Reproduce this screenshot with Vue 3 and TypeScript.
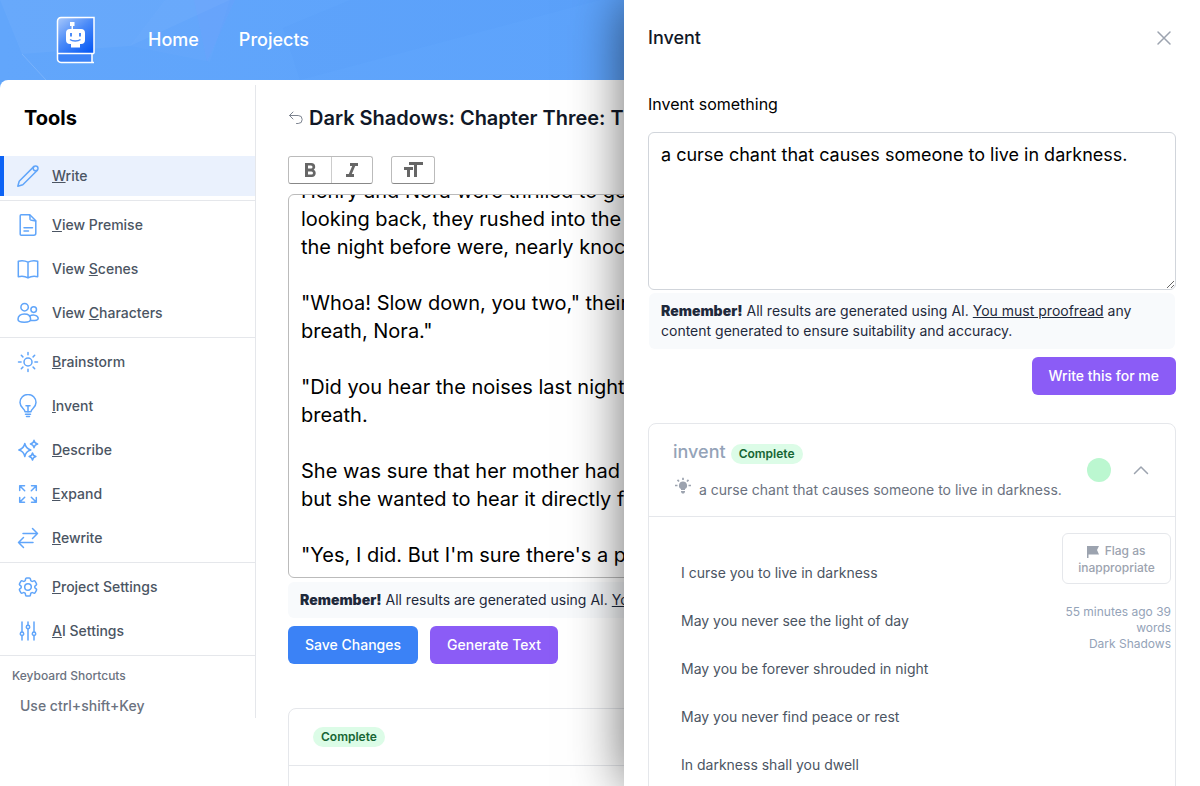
<script setup lang="ts">
import { onMounted, ref } from 'vue'

interface Tool {
  icon: string
  before: string
  key: string
  after: string
  active?: boolean
}

const groups: Tool[][] = [
  [{ icon: 'pencil', before: '', key: 'W', after: 'rite', active: true }],
  [
    { icon: 'document', before: '', key: 'V', after: 'iew Premise' },
    { icon: 'book', before: 'View ', key: 'S', after: 'cenes' },
    { icon: 'people', before: 'View ', key: 'C', after: 'haracters' },
  ],
  [
    { icon: 'sun', before: '', key: 'B', after: 'rainstorm' },
    { icon: 'bulb', before: '', key: 'I', after: 'nvent' },
    { icon: 'sparkles', before: '', key: 'D', after: 'escribe' },
    { icon: 'expand', before: '', key: 'E', after: 'xpand' },
    { icon: 'swap', before: '', key: 'R', after: 'ewrite' },
  ],
  [
    { icon: 'gear', before: '', key: 'P', after: 'roject Settings' },
    { icon: 'sliders', before: '', key: 'A', after: 'I Settings' },
  ],
]

const icons: Record<string, string[]> = {
  pencil: [
    'M17.800 2.600L3.200 17.200l-1.400 5 5-1.400L21.400 6.200',
    'M22 4.400a2.400 2.400 0 1 1-4.800 0a2.400 2.400 0 0 1 4.800 0z',
  ],
  document: [
    'M5.2 1.8h8.600l6 6v12.400a2 2 0 0 1-2 2H5.200a1 1 0 0 1-1-1V2.800a1 1 0 0 1 1-1z',
    'M13.500 2c1 1.200.2 3.300.6 4.500.5 1.300 3.500.8 5.400 1.500',
    'M8 14.800h8.500M8 18h4.500',
  ],
  book: [
    'M12 5.200C9 3.600 5.500 3.500 2.300 4.200v15.500c3.200-.7 6.700-.6 9.700 1.200 3-1.800 6.500-1.900 9.700-1.200V4.200C18.500 3.500 15 3.600 12 5.200zM12 5.200v15.500',
  ],
  people: [
    'M12.300 6.200a3.700 3.700 0 1 1-7.400 0a3.700 3.700 0 0 1 7.400 0z',
    'M20.500 8.600a2.800 2.800 0 1 1-5.600 0a2.800 2.800 0 0 1 5.600 0z',
    'M2 18.200c0-3.300 2.500-5.200 6.300-5.200s6.300 2 6.300 5.200c0 2-2 3-6.300 3S2 20.200 2 18.200z',
    'M13.500 15.200c3.800-2.200 8.700-.7 8.700 2.300 0 1.700-2.400 2.200-7.600 2',
  ],
  sun: [
    'M16 12a4 4 0 1 1-8 0a4 4 0 0 1 8 0z',
    'M12 2.500v2.300M12 19.200v2.300M2.500 12h2.600M18.900 12h2.600M5.300 5.300l1.600 1.600M17.100 17.100l1.600 1.600M5.300 18.700l1.600-1.600M17.100 6.900l1.600-1.600',
  ],
  bulb: [
    'M9 17.800c0-3-5-4-5-9.300a8 8 0 0 1 16 0c0 5.300-5 6.300-5 9.300z',
    'M12 17.800v-6M10 11.800h4M9.500 20.300h5M10.500 22.500h3',
  ],
  sparkles: [
    'M8.800 5.500c.8 4 2.200 5.500 6 6.500-3.800 1-5.200 2.500-6 6.500-.8-4-2.200-5.500-6-6.500 3.800-1 5.200-2.500 6-6.500z',
    'M18 2.300c.4 2.200 1.300 3.200 3.600 3.700-2.300.5-3.200 1.500-3.600 3.700-.4-2.200-1.300-3.200-3.600-3.700 2.300-.5 3.200-1.500 3.600-3.700z',
    'M16.500 15c.4 2.200 1.200 3 3.400 3.500-2.200.5-3 1.400-3.400 3.500-.4-2.100-1.200-3-3.400-3.500 2.200-.5 3-1.300 3.400-3.500z',
  ],
  expand: [
    'M3.700 8.500V3.700h4.800M3.700 3.700l5 5M15.500 3.700h4.800v4.800M20.300 3.700l-5 5M3.700 15.500v4.800h4.800M3.700 20.300l5-5M20.300 15.500v4.800h-4.800M20.300 20.300l-5-5',
  ],
  swap: ['M7 7.500h14.500M16.500 2.500l5 5-5 5M17 16.500H2.500M7.500 11.500l-5 5 5 5'],
  gear: [
    'M9.594 3.940c.09-.542.56-.94 1.110-.94h2.593c.55 0 1.020.398 1.110.94l.213 1.281c.063.374.313.686.645.87.074.04.147.083.22.127.325.196.72.257 1.075.124l1.217-.456a1.125 1.125 0 0 1 1.370.49l1.296 2.247a1.125 1.125 0 0 1-.26 1.431l-1.003.827c-.293.241-.438.613-.43.992a7.723 7.723 0 0 1 0 .255c-.008.378.137.75.43.991l1.004.827c.424.35.534.955.26 1.430l-1.298 2.247a1.125 1.125 0 0 1-1.369.491l-1.217-.456c-.355-.133-.75-.072-1.076.124a6.470 6.470 0 0 1-.22.128c-.331.183-.581.495-.644.869l-.213 1.281c-.09.543-.56.94-1.110.94h-2.594c-.55 0-1.019-.398-1.110-.94l-.213-1.281c-.062-.374-.312-.686-.644-.87a6.520 6.520 0 0 1-.22-.127c-.325-.196-.72-.257-1.076-.124l-1.217.456a1.125 1.125 0 0 1-1.369-.49l-1.297-2.247a1.125 1.125 0 0 1 .26-1.431l1.004-.827c.292-.24.437-.613.43-.991a6.932 6.932 0 0 1 0-.255c.007-.38-.138-.751-.43-.992l-1.004-.827a1.125 1.125 0 0 1-.26-1.430l1.297-2.247a1.125 1.125 0 0 1 1.370-.491l1.216.456c.356.133.751.072 1.076-.124.072-.044.146-.086.22-.128.332-.183.582-.495.644-.869z',
    'M15.300 12a3.300 3.300 0 1 1-6.600 0a3.300 3.300 0 0 1 6.600 0z',
  ],
  sliders: [
    'M6 3v10M6 16.500V21M12 3v3M12 9.500V21M18 3v10M18 16.500V21',
    'M7.700 14.800a1.700 1.700 0 1 1-3.400 0a1.700 1.700 0 0 1 3.400 0zM13.700 8a1.700 1.700 0 1 1-3.400 0a1.700 1.700 0 0 1 3.400 0zM19.700 14.800a1.700 1.700 0 1 1-3.400 0a1.700 1.700 0 0 1 3.400 0z',
  ],
}

const chapter = ref(
  [
    'Henry and Nora were thrilled to get',
    'looking back, they rushed into the',
    'the night before were, nearly knock',
    '',
    '"Whoa! Slow down, you two," their',
    'breath, Nora."',
    '',
    '"Did you hear the noises last night',
    'breath.',
    '',
    'She was sure that her mother had',
    'but she wanted to hear it directly f',
    '',
    '"Yes, I did. But I\'m sure there\'s a pe',
  ].join('\n'),
)
const prompt = ref('a curse chant that causes someone to live in darkness.')
const verses = [
  'I curse you to live in darkness',
  'May you never see the light of day',
  'May you be forever shrouded in night',
  'May you never find peace or rest',
  'In darkness shall you dwell',
]

const editor = ref<HTMLTextAreaElement | null>(null)
onMounted(() => {
  if (editor.value) editor.value.scrollTop = editor.value.scrollHeight
})
</script>

<template>
  <div class="page">
    <header class="topbar">
      <svg class="facets" viewBox="0 0 1200 80" preserveAspectRatio="none" aria-hidden="true">
        <path d="M0 0h230L130 46 22 54z" fill="#fff" opacity=".04" />
        <path d="M165 0h65l-20 62-80-16z" fill="#fff" opacity=".02" />
        <path d="M194 0l13 62L235 0z" fill="#7c9cff" opacity=".14" />
        <path d="M283 28L350 0h250L300 80z" fill="#3b8ff5" opacity=".05" />
        <path d="M22 54l24 26" stroke="#fff" opacity=".15" />
      </svg>
      <a class="logo" href="#" aria-label="Home page">
        <svg width="40" height="48" viewBox="0 0 40 48" aria-hidden="true">
          <defs>
            <linearGradient id="cover" x1="0" y1="0" x2=".8" y2="1">
              <stop offset="0" stop-color="#a9c9fb" />
              <stop offset=".5" stop-color="#4b8bf8" />
              <stop offset="1" stop-color="#0b5cf5" />
            </linearGradient>
          </defs>
          <path d="M5 1.500h33v36H1.500V5A3.500 3.500 0 0 1 5 1.500z" fill="url(#cover)" />
          <path d="M1.500 37.500h34.500v8.500H5a3.500 3.500 0 0 1-3.500-3.500z" fill="#3b82f6" />
          <path d="M38 37.500V1.500H5A3.500 3.500 0 0 0 1.500 5v37.500A3.500 3.500 0 0 0 5 46.500h33M1.500 37.500H38M36 37.500v9" fill="none" stroke="#fff" stroke-width="1.500" />
          <path d="M14 6h4.500v4H17v3h8a4 4 0 0 1 4 4v7a4 4 0 0 1-4 4h-1v3.500h-9V28h-1a4 4 0 0 1-4-4v-7a4 4 0 0 1 4-4h1.500v-3H14z" fill="#fff" />
          <path d="M15 17v3.500M24 17v3.500" stroke="#4b8bf8" stroke-width="2" />
          <path d="M14 23.500c2.500 2 8 2 10.500 0" fill="none" stroke="#4b8bf8" stroke-width="1.500" />
        </svg>
      </a>
      <nav class="links">
        <a href="#">Home</a>
        <a href="#">Projects</a>
      </nav>
    </header>

    <div class="body">
      <aside class="sidebar">
        <h2>Tools</h2>
        <nav>
          <div v-for="(group, g) in groups" :key="g" class="group">
            <a v-for="t in group" :key="t.icon" href="#" class="tool" :class="{ active: t.active }">
              <svg class="tool-icon" width="24" height="24" viewBox="0 0 24 24" aria-hidden="true">
                <path v-for="d in icons[t.icon]" :key="d" :d="d" />
              </svg>
              <span>{{ t.before }}<u>{{ t.key }}</u>{{ t.after }}</span>
            </a>
          </div>
        </nav>
        <div class="shortcuts">
          <h3>Keyboard Shortcuts</h3>
          <p>Use ctrl+shift+Key</p>
        </div>
      </aside>

      <main class="main">
        <h1>
          <a href="#" aria-label="Back">
            <svg width="16" height="16" viewBox="0 0 16 16" fill="none" stroke="#7d8490" stroke-linecap="round" stroke-linejoin="round" aria-hidden="true">
              <path d="M5 2L1.500 5.500 5 9M1.500 5.500h8.700a4 4 0 0 1 0 8H8.500" />
            </svg>
          </a>
          <span>Dark Shadows: Chapter Three: Ti</span>
        </h1>
        <div class="toolbar">
          <div class="btns">
            <button type="button" aria-label="Bold">
              <svg width="24" height="24" viewBox="0 0 24 24" aria-hidden="true">
                <path d="M15.600 11.800c1-.7 1.600-1.800 1.600-2.800a4 4 0 0 0-4-4H7v14h7c2.100 0 3.700-1.700 3.700-3.800 0-1.500-.8-2.800-2.100-3.400zM10 7.500h3a1.500 1.500 0 1 1 0 3h-3v-3zm3.500 9H10v-3h3.500a1.500 1.500 0 1 1 0 3z" />
              </svg>
            </button>
            <button type="button" aria-label="Italic">
              <svg width="24" height="24" viewBox="0 0 24 24" aria-hidden="true">
                <path d="M10 5v3h2.200l-3.400 8H6v3h8v-3h-2.200l3.400-8H18V5h-8z" />
              </svg>
            </button>
          </div>
          <div class="btns">
            <button type="button" aria-label="Heading">
              <svg width="24" height="24" viewBox="0 0 24 24" aria-hidden="true">
                <path d="M12 9v3H9v7H6v-7H3V9h9zM8 4h14v3h-6v12h-3V7H8V4z" />
              </svg>
            </button>
          </div>
        </div>
        <textarea ref="editor" v-model="chapter" class="editor" wrap="off" aria-label="Chapter text"></textarea>
        <p class="notice"><strong>Remember!</strong> All results are generated using AI. <u>You</u></p>
        <div class="actions">
          <button type="button" class="btn blue">Save Changes</button>
          <button type="button" class="btn purple">Generate Text</button>
        </div>
        <section class="card history">
          <div class="history-head"><span class="badge">Complete</span></div>
        </section>
      </main>
    </div>

    <section class="drawer" role="dialog" aria-labelledby="drawer-title">
      <div class="drawer-head">
        <h2 id="drawer-title">Invent</h2>
        <button type="button" class="plain" aria-label="Close">
          <svg width="24" height="24" viewBox="0 0 24 24" fill="none" stroke="#9ca3af" stroke-width="1.500" stroke-linecap="round" aria-hidden="true">
            <path d="M6 6l12 12M18 6L6 18" />
          </svg>
        </button>
      </div>
      <label for="prompt">Invent something</label>
      <textarea id="prompt" v-model="prompt" class="prompt"></textarea>
      <p class="notice inset"><strong>Remember!</strong> All results are generated using AI. <u>You must proofread</u> any content generated to ensure suitability and accuracy.</p>
      <div class="submit"><button type="button" class="btn purple">Write this for me</button></div>

      <article class="card">
        <div class="result-head">
          <div class="result-title">
            <div class="kind"><h3>invent</h3><span class="badge">Complete</span></div>
            <p>
              <svg width="20" height="20" viewBox="0 0 20 20" aria-hidden="true">
                <path d="M10 5.500a4 4 0 0 0-2 7.500V14h4v-1a4 4 0 0 0-2-7.500zM8 15h4v1l-1 1.500H9L8 16z" fill="#9ca3af" />
                <path d="M10 1.800v2.200M4.500 3.900l1.500 1.600M15.500 3.900L14 5.500M2 9.500h2.500M15.500 9.500H18" stroke="#9ca3af" stroke-width="1.700" fill="none" />
              </svg>
              <span>{{ prompt }}</span>
            </p>
          </div>
          <span class="dot"></span>
          <button type="button" class="plain" aria-label="Collapse">
            <svg width="20" height="20" viewBox="0 0 20 20" fill="none" stroke="#9ca3af" stroke-width="1.500" stroke-linecap="round" stroke-linejoin="round" aria-hidden="true">
              <path d="M3.500 13.500L10 7l6.500 6.500" />
            </svg>
          </button>
        </div>
        <div class="result-body">
          <div class="verses">
            <p v-for="v in verses" :key="v">{{ v }}</p>
          </div>
          <div class="meta">
            <button type="button" class="flag">
              <svg width="12" height="12" viewBox="0 0 12 12" aria-hidden="true">
                <path d="M0 0h12l-2 4 2 4.500H1.500V12H0z" fill="#9ca3af" />
              </svg>
              Flag as inappropriate
            </button>
            <p>55 minutes ago 39 words<br />Dark Shadows</p>
          </div>
        </div>
      </article>
    </section>
  </div>
</template>

<style>
html,
body {
  margin: 0;
  background: #fff;
}
</style>

<style scoped>
.page,
.page * {
  box-sizing: border-box;
}
.page {
  position: relative;
  height: 100vh;
  overflow: hidden;
  background: #60a5fa;
  font-family: Inter, "Liberation Sans", sans-serif;
  font-size: 14px;
  line-height: 20px;
  color: #1e293b;
}
h1, h2, h3, p {
  margin: 0;
}
a {
  color: inherit;
  text-decoration: none;
}
button, textarea {
  font: inherit;
}
button {
  cursor: pointer;
}
.topbar {
  position: relative;
  display: flex;
  align-items: center;
  height: 80px;
  padding-left: 56px;
  gap: 52px;
  background: linear-gradient(90deg, #62a6fb, #58a0fc);
}
.facets {
  position: absolute;
  inset: 0;
  width: 100%;
  height: 100%;
}
.logo, .links {
  position: relative;
  display: flex;
}
.links {
  gap: 40px;
  font-size: 18px;
  font-weight: 500;
  line-height: 28px;
  color: #fff;
}
.body {
  display: flex;
  align-items: flex-start;
  min-height: calc(100vh - 80px);
  background: #fff;
  border-top-left-radius: 8px;
}
.sidebar {
  flex: 0 0 256px;
  margin-top: 5px;
  padding: 19px 0 2px;
  border-right: 1px solid #e5e7eb;
}
.sidebar h2 {
  padding: 0 24px;
  margin-bottom: 20px;
  font-size: 20px;
  font-weight: 700;
  line-height: 28px;
  color: #000;
}
.group {
  display: flex;
  flex-direction: column;
  gap: 4px;
  padding: 4px 0;
  border-bottom: 1px solid #e5e7eb;
}
.tool {
  display: flex;
  align-items: center;
  gap: 12px;
  height: 40px;
  padding-left: 16px;
  font-weight: 500;
  color: #4b5563;
}
.tool.active {
  padding-left: 12px;
  border-left: 4px solid #0d63f5;
  background: #eaf1fd;
}
.tool-icon {
  fill: none;
  stroke: #60a5fa;
  stroke-width: 1.5;
  stroke-linecap: round;
  stroke-linejoin: round;
}
.shortcuts {
  padding: 12px 12px 0;
  color: #6b7280;
}
.shortcuts h3 {
  margin-bottom: 12px;
  font-size: 12px;
  font-weight: 500;
  line-height: 16px;
}
.shortcuts p {
  padding-left: 8px;
  font-weight: 500;
}
.main {
  flex: 1;
  min-width: 0;
  padding: 24px 32px 0;
}
.main h1 {
  display: flex;
  align-items: center;
  gap: 5px;
  font-size: 20px;
  font-weight: 600;
  line-height: 28px;
  color: #111827;
  white-space: nowrap;
}
.main h1 a {
  display: flex;
}
.toolbar {
  display: flex;
  gap: 18px;
  margin: 24px 0 10px;
}
.btns {
  display: flex;
  border: 1px solid #bbb;
  border-bottom-color: #888;
  border-radius: 3px;
}
.btns button {
  display: flex;
  align-items: center;
  justify-content: center;
  width: 42px;
  height: 26px;
  padding: 0;
  border: 0;
  background: #fff;
  border-radius: 3px;
}
.btns button + button {
  width: 41px;
  border-left: 1px solid #ccc;
  border-radius: 0 3px 3px 0;
}
.btns svg {
  fill: #666;
}
textarea {
  display: block;
  width: 100%;
  padding: 8px 12px;
  border-radius: 6px;
  font-size: 20px;
  line-height: 28px;
  color: #000;
  background: #fff;
}
.editor {
  height: 384px;
  border: 1px solid #bbb;
  overflow: hidden;
  resize: none;
}
.notice {
  margin-top: 4px;
  padding: 8px 12px;
  border-radius: 6px;
  background: #f8fafc;
}
.notice.inset {
  margin: 3px 1px 0;
}
.notice strong {
  font-weight: 900;
}
.actions {
  display: flex;
  gap: 12px;
  margin-top: 8px;
}
.btn {
  padding: 9px 17px;
  border: 0;
  border-radius: 6px;
  font-weight: 500;
  color: #fff;
}
.blue {
  background: #3b82f6;
}
.purple {
  background: #8b5cf6;
}
.card {
  border: 1px solid #e5e7eb;
  border-radius: 8px;
}
.history {
  min-height: 400px;
  margin-top: 44px;
}
.history-head {
  display: flex;
  padding: 18px 24px;
  border-bottom: 1px solid #e5e7eb;
}
.badge {
  padding: 0 8px;
  border-radius: 10px;
  background: #dcfce7;
  font-size: 12px;
  font-weight: 600;
  line-height: 20px;
  color: #166534;
}
.drawer {
  position: absolute;
  top: 0;
  right: 0;
  bottom: 0;
  width: 52%;
  max-width: 576px;
  padding: 24px;
  background: #fff;
  box-shadow: 0 0 50px rgba(0, 0, 0, 0.58);
}
.drawer-head {
  display: flex;
  align-items: center;
  justify-content: space-between;
  margin-bottom: 40px;
}
.drawer-head h2 {
  font-size: 18px;
  font-weight: 500;
  line-height: 28px;
  color: #111827;
}
.plain {
  display: flex;
  padding: 0;
  border: 0;
  background: none;
}
label {
  display: block;
  margin-bottom: 16px;
  font-size: 16px;
  line-height: 24px;
  color: #000;
}
.prompt {
  height: 158px;
  border: 1px solid #d1d5db;
  font-size: 18px;
}
.submit {
  display: flex;
  justify-content: flex-end;
  margin: 8px 0 28px;
}
.result-head {
  display: flex;
  align-items: center;
  padding: 16px 24px;
  border-bottom: 1px solid #e5e7eb;
}
.result-title {
  flex: 1;
}
.kind {
  display: flex;
  align-items: center;
  gap: 5px;
}
.kind h3 {
  font-size: 18px;
  font-weight: 500;
  line-height: 24px;
  color: #94a3b8;
}
.kind .badge {
  margin-top: 4px;
}
.result-title p {
  display: flex;
  gap: 6px;
  margin-top: 12px;
  color: #6b7280;
}
.result-title p span {
  padding-top: 4px;
}
.dot {
  width: 24px;
  height: 24px;
  margin-right: 20px;
  border-radius: 50%;
  background: #bbf7d0;
}
.result-body {
  display: flex;
  justify-content: space-between;
  padding: 16px 4px 48px 32px;
  color: #4b5563;
}
.verses {
  display: flex;
  flex-direction: column;
  gap: 28px;
  padding-top: 30px;
}
.meta {
  width: 109px;
  font-size: 12px;
  line-height: 16px;
  text-align: right;
  color: #94a3b8;
}
.flag {
  width: 100%;
  margin-bottom: 20px;
  padding: 8px 8px 7px;
  border: 1px solid #e5e7eb;
  border-radius: 6px;
  background: #fff;
  font-weight: 500;
  line-height: 17px;
  color: #9ca3af;
}
.flag svg {
  margin-right: 2px;
  vertical-align: -3px;
}
</style>
